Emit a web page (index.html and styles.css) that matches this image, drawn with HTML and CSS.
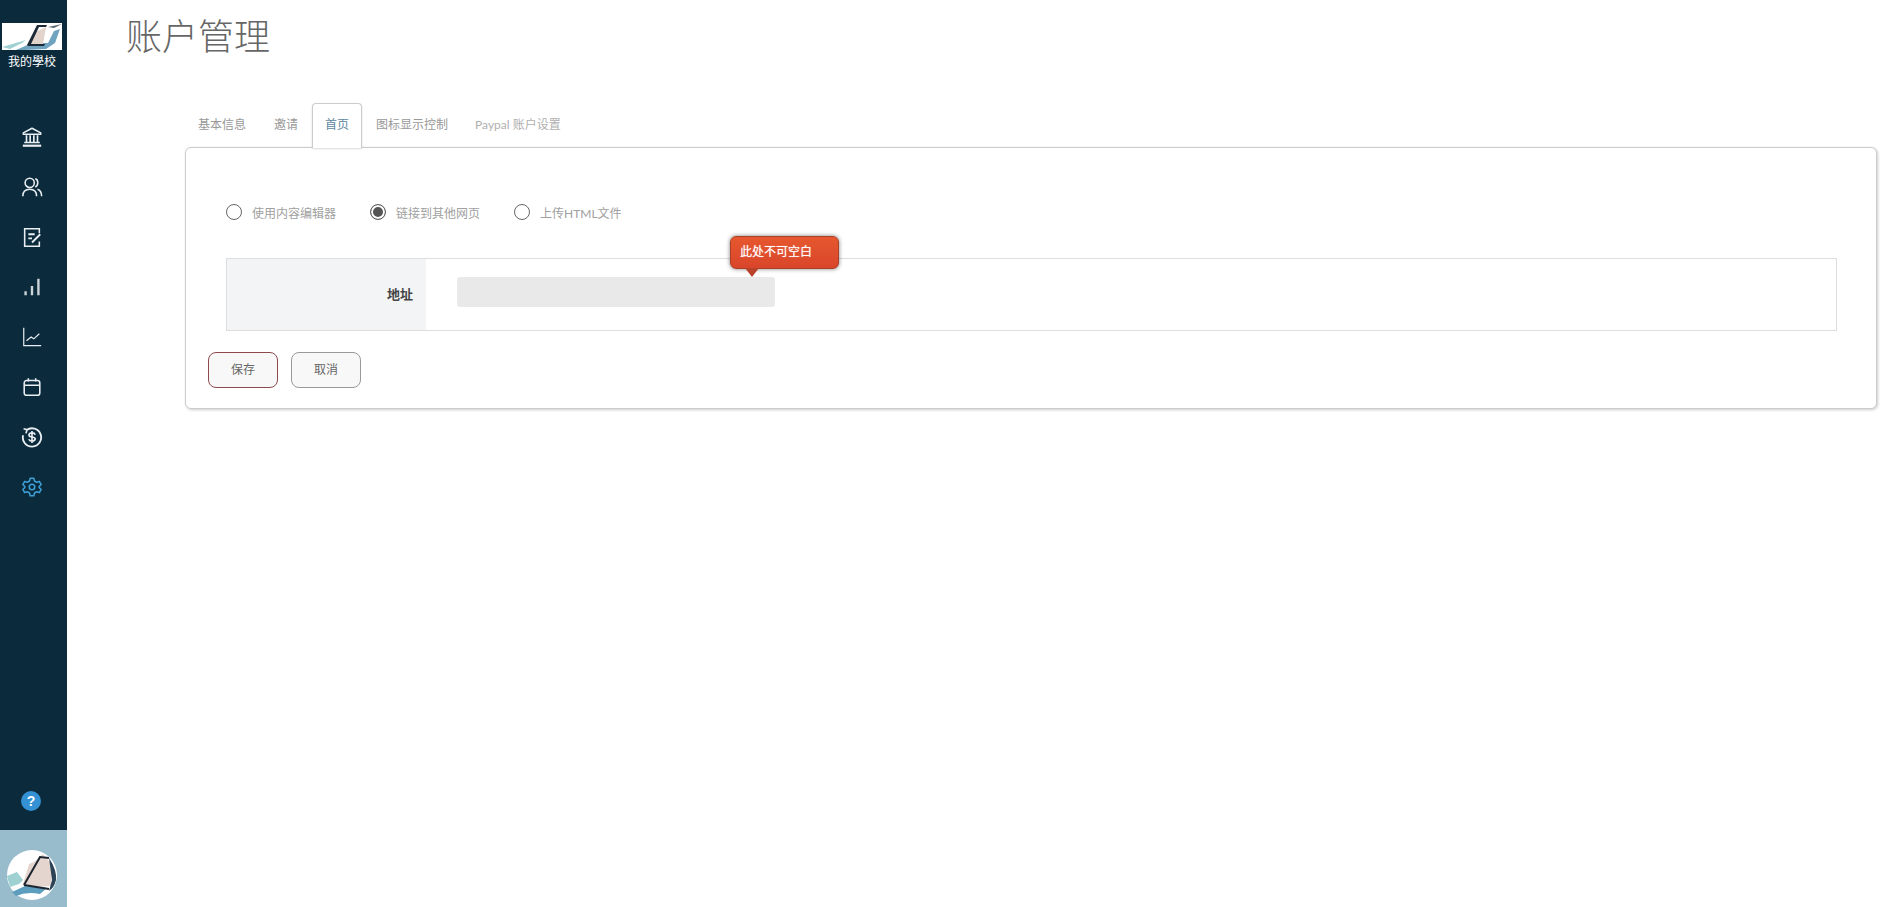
FILE: index.html
```html
<!DOCTYPE html>
<html lang="zh-CN">
<head>
    <meta charset="UTF-8">
    <title>账户管理</title>
    <link rel="stylesheet" href="styles.css">
</head>
<body>
    <aside class="side">
        <div class="brand">
            <svg class="brand-logo" viewBox="0 0 60 27">
                <rect width="60" height="27" fill="#fff"/>
                <path d="M0 24 L24 17 L20 20 L8 26Z" fill="#9fd0d2"/>
                <path d="M14 27 L30 20 L46 20 L52 8 L58 6 L53 20 L44 26 L22 27Z" fill="#6fa3c0"/>
                <path d="M26 22 L33 9 L38 7 L44 4 L41 21Z" fill="#e2d3cb"/>
                <path d="M25 22 L35 2 L45 2 L44 4 L37 4 L29 21 L43 21 L42 23 L26 23Z" fill="#1c2a38"/>
                <path d="M46 4 L60 1 L52 5Z" fill="#5a6a72"/>
            </svg>
            <div class="brand-name">我的學校</div>
        </div>
        <nav class="nav">
            <a class="nav-item">
                <svg viewBox="0 0 24 24"><path d="M12 2.5 L2.5 7.5 V9 H21.5 V7.5Z" stroke-linejoin="round"/><path d="M2 21.5 H22" stroke-width="2.4"/><path d="M3.5 18 H20.5 M6 10 V18 M10 10 V18 M14 10 V18 M18 10 V18" stroke-width="1.8"/></svg>
            </a>
            <a class="nav-item">
                <svg viewBox="0 0 24 24"><circle cx="9.5" cy="7.5" r="5"/><path d="M2 22 C2 16.5 5 14.5 9.5 14.5 C14 14.5 17 16.5 17 22"/><path d="M15.5 3 C19 3.5 19.5 10.5 15.5 12 M18 14.5 C21 15.5 22.5 18 22.5 22"/></svg>
            </a>
            <a class="nav-item">
                <svg viewBox="0 0 24 24"><path d="M20 8 V3 H4 V22 H20 V17"/><path d="M8 9 H15 M8 13.5 H12 M12 18 L21 9" stroke-width="2"/></svg>
            </a>
            <a class="nav-item">
                <svg viewBox="0 0 24 24"><path d="M5 16.5 V21 M12 11 V21 M19 3 V21" stroke="#c9d3d8" stroke-width="2.6"/></svg>
            </a>
            <a class="nav-item">
                <svg viewBox="0 0 24 24"><path d="M3 2 V21.5 H22" stroke-width="1.3"/><path d="M6 16 L11 12 L14 14 L20 8.5" stroke-width="1.3"/></svg>
            </a>
            <a class="nav-item">
                <svg viewBox="0 0 24 24"><rect x="3.5" y="5" width="17" height="16" rx="2.5"/><path d="M3.5 10 H20.5 M8 2.5 V6 M16 2.5 V6"/></svg>
            </a>
            <a class="nav-item">
                <svg viewBox="0 0 24 24"><path d="M6 4.5 A10 10 0 1 1 2.3 10" stroke-width="2"/><path d="M2.8 3 L6.5 4 L5.5 8" stroke-width="1.8"/><path d="M15.5 9.5 C15 8 13.5 7.5 12 7.5 C10 7.5 8.7 8.5 8.7 10 C8.7 13 15.5 11 15.5 14 C15.5 15.5 14 16.5 12 16.5 C10.3 16.5 9 15.8 8.5 14.5 M12 5.5 V18.5" stroke-width="1.8"/></svg>
            </a>
            <a class="nav-item nav-item-on">
                <svg viewBox="0 0 24 24"><path d="M10 2.5 H14 L14.7 5.5 L17 6.8 L20 5.9 L22 9.3 L19.8 11.4 V12.6 L22 14.7 L20 18.1 L17 17.2 L14.7 18.5 L14 21.5 H10 L9.3 18.5 L7 17.2 L4 18.1 L2 14.7 L4.2 12.6 V11.4 L2 9.3 L4 5.9 L7 6.8 L9.3 5.5Z" stroke-linejoin="round"/><circle cx="12" cy="12" r="3"/></svg>
            </a>
        </nav>
        <div class="help">?</div>
        <div class="user">
            <svg class="user-pic" viewBox="0 0 50 50">
                <circle cx="25" cy="25" r="25" fill="#fff"/>
                <path d="M0 26 L10 22 L16 30 L12 34 L3 37Z" fill="#9fd0d2"/>
                <path d="M5 42 L18 36 L40 38 L33 44 Q20 41 9 46Z" fill="#5d9dbd"/>
                <path d="M16 34 L22 14 L27 12 L36 4 L45 15 L44 36 L25 37Z" fill="#e4d6ce"/>
                <path d="M17 35 L33 7 L42 8" fill="none" stroke="#1c2530" stroke-width="2"/>
                <path d="M17 35 L42 39" fill="none" stroke="#1c2530" stroke-width="2"/>
                <path d="M42 8 Q50 20 49 30 Q47 38 42 41 L45 30 Z" fill="#2d4458"/>
            </svg>
        </div>
    </aside>

    <main class="main">
        <h1 class="title">账户管理</h1>
        <div class="content">
            <div class="tabs">
                <a class="tab">基本信息</a>
                <a class="tab">邀请</a>
                <a class="tab tab-on">首页</a>
                <a class="tab">图标显示控制</a>
                <a class="tab tab-light">Paypal 账户设置</a>
            </div>
            <section class="panel">
                <div class="radios">
                    <label class="radio"><span class="dot"></span>使用内容编辑器</label>
                    <label class="radio"><span class="dot dot-on"></span>链接到其他网页</label>
                    <label class="radio"><span class="dot"></span>上传HTML文件</label>
                </div>
                <div class="row">
                    <div class="row-label">地址</div>
                    <div class="row-field">
                        <div class="input-wrap">
                            <input class="input" type="text" disabled>
                            <div class="tip">此处不可空白</div>
                        </div>
                    </div>
                </div>
                <div class="btns">
                    <button class="btn btn-focus">保存</button>
                    <button class="btn">取消</button>
                </div>
            </section>
        </div>
    </main>
</body>
</html>
```

FILE: styles.css
```css
* {
    box-sizing: border-box;
}
html, body {
    height: 100%;
}
body {
    margin: 0;
    display: flex;
    background-color: #fff;
    color: #555;
    font-family: Lato, "Noto Sans CJK SC", sans-serif;
    font-size: 12px;
    overflow: hidden;
}
.side {
    width: 67px;
    height: 907px;
    flex-shrink: 0;
    display: flex;
    flex-direction: column;
    background-color: #0b2a3b;
}
.brand {
    padding: 23px 5px 0 2px;
    color: #fff;
    text-align: center;
}
.brand-logo {
    display: block;
    width: 60px;
    height: 27px;
}
.brand-name {
    margin-top: 3px;
    line-height: 18px;
    white-space: nowrap;
}
.nav {
    margin-top: 41px;
    padding-right: 3px;
    display: flex;
    flex-direction: column;
}
.nav-item {
    height: 50px;
    display: flex;
    align-items: center;
    justify-content: center;
}
.nav-item svg {
    width: 22px;
    height: 22px;
    fill: none;
    stroke: #e8eef1;
    stroke-width: 1.7;
}
.nav-item-on svg {
    stroke: #3b9fd3;
}
.help {
    width: 20px;
    height: 20px;
    margin: auto auto 19px 21px;
    border-radius: 50%;
    background-color: #3391d4;
    color: #fff;
    font-family: "Liberation Sans", sans-serif;
    font-size: 14px;
    font-weight: bold;
    line-height: 20px;
    text-align: center;
}
.user {
    height: 77px;
    padding: 20px 0 0 7px;
    background-color: #98bccb;
}
.user-pic {
    display: block;
    width: 50px;
    height: 50px;
}
.main {
    flex: 1;
    padding: 0 22px 0 59px;
}
.title {
    margin: 12px 0 0 0;
    color: #666;
    font-size: 36px;
    font-weight: 300;
    line-height: 48px;
}
.content {
    margin-left: 59px;
}
.tabs {
    display: flex;
    margin-top: 43px;
    height: 45px;
    position: relative;
    z-index: 1;
}
.tab {
    padding: 0 12px;
    margin-right: 1px;
    line-height: 41px;
    color: #999;
    border: 1px solid transparent;
    border-bottom: 0;
}
.tab:first-child {
    margin-right: 2px;
}
.tab-on {
    color: #5d87a0;
    background-color: #fff;
    border-color: #ccc;
    border-radius: 4px 4px 0 0;
    box-shadow: 0 1px 2px rgba(0, 0, 0, 0.15);
}
.tab-light {
    color: #b0b0b0;
}
.panel {
    height: 262px;
    margin-top: -1px;
    padding: 49px 39px 0 40px;
    border: 1px solid #ccc;
    border-radius: 6px;
    box-shadow: 1px 1px 3px rgba(0, 0, 0, 0.2);
    background-color: #fff;
}
.radios {
    display: flex;
    height: 30px;
    align-items: center;
    gap: 34px;
}
.radio {
    display: flex;
    align-items: center;
    color: #a0a0a0;
}
.dot {
    width: 16px;
    height: 16px;
    margin-right: 10px;
    border: 1px solid #666;
    border-radius: 50%;
    background-color: #fff;
}
.dot-on {
    background-color: #555;
    box-shadow: inset 0 0 0 2px #fff;
}
.row {
    display: flex;
    height: 73px;
    margin-top: 31px;
    border: 1px solid #ddd;
}
.row-label {
    width: 199px;
    padding-right: 13px;
    background-color: #f3f4f6;
    color: #444;
    font-size: 13px;
    font-weight: bold;
    line-height: 71px;
    text-align: right;
}
.row-field {
    padding: 18px 31px;
}
.input-wrap {
    position: relative;
}
.input {
    display: block;
    width: 318px;
    height: 30px;
    border: 0;
    border-radius: 3px;
    background-color: #e9e9e9;
}
.tip {
    position: absolute;
    left: 273px;
    top: -41px;
    width: 109px;
    height: 33px;
    padding-left: 9px;
    border: 1px solid #a8402a;
    border-radius: 6px;
    background: linear-gradient(#e6582f, #d9452a);
    box-shadow: 0 0 4px rgba(0, 0, 0, 0.5);
    color: #fff;
    line-height: 29px;
    white-space: nowrap;
    text-shadow: 0 0 1px rgba(255, 255, 255, 0.6);
}
.tip::after {
    content: "";
    position: absolute;
    left: 14px;
    top: 31px;
    border: 7px solid transparent;
    border-top: 9px solid #b9432a;
    border-bottom: 0;
}
.btns {
    display: flex;
    gap: 13px;
    margin: 21px 0 0 -18px;
}
.btn {
    width: 70px;
    height: 36px;
    padding: 0 0 3px;
    border: 1px solid #999;
    border-radius: 8px;
    background-color: #f8f8f8;
    color: #666;
    font-family: inherit;
    font-size: 12px;
}
.btn-focus {
    border-color: #8c4a4f;
}
```
